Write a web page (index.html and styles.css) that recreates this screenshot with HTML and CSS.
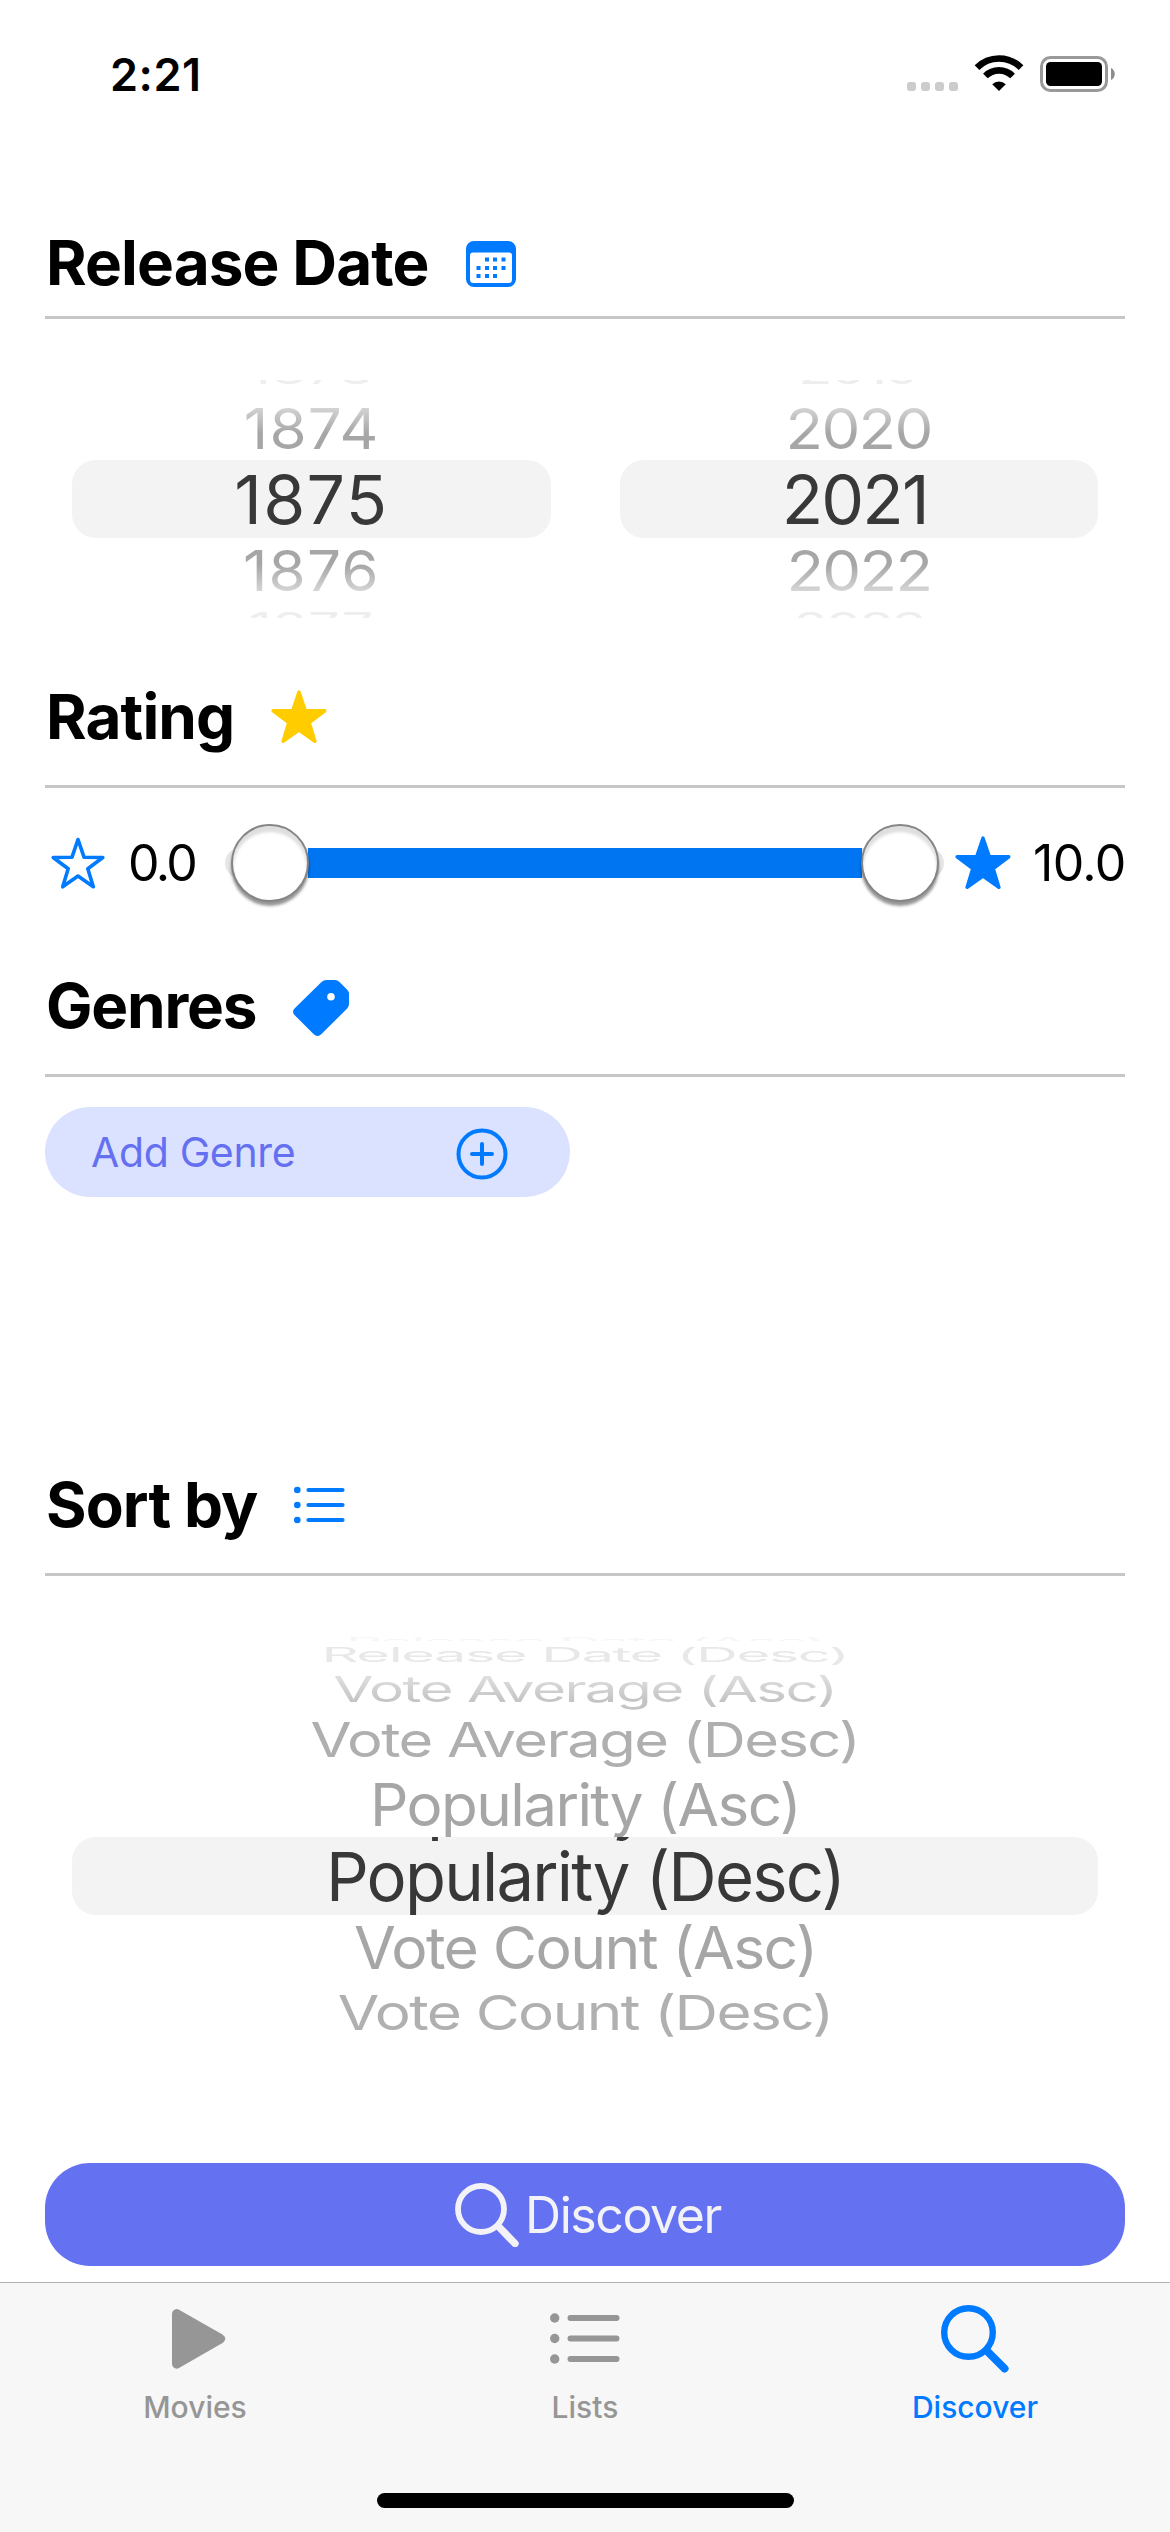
FILE: index.html
```html
<!DOCTYPE html>
<html lang="en">
<head>
<meta charset="utf-8">
<title>Discover</title>
<link rel="stylesheet" href="styles.css">
</head>
<body>
<div class="screen">
  <header class="status">
    <span class="time">2:21</span>
    <svg class="status-icons" width="210" height="40" viewBox="0 0 210 40">
      <g fill="#ccc"><rect x="2" y="28" width="9" height="9" rx="3"/><rect x="16" y="28" width="9" height="9" rx="3"/><rect x="30" y="28" width="9" height="9" rx="3"/><rect x="44" y="28" width="9" height="9" rx="3"/></g>
      <g fill="none" stroke="#000" stroke-width="6.6"><path d="M72 13.6a31 31 0 0 1 44 0"/><path d="M80.400 22a19.200 19.200 0 0 1 27.200 0"/></g>
      <path d="M94 37l-6.800-6.800a9.800 9.800 0 0 1 13.600 0z"/>
      <rect x="136.500" y="3.500" width="65" height="33" rx="9" fill="none" stroke="#999" stroke-width="3"/>
      <rect x="141" y="8" width="56" height="24" rx="4.500"/>
      <path d="M206 14c5 2.400 5 9.600 0 12z" fill="#8c8c8c"/>
    </svg>
  </header>

  <main class="content">
    <section class="section release">
      <div class="heading">
        <h2 class="t-release">Release Date</h2>
        <svg width="50" height="46" viewBox="0 0 50 46" fill="#007aff"><path fill-rule="evenodd" d="M8 0h34a8 8 0 0 1 8 8v30a8 8 0 0 1-8 8H8a8 8 0 0 1-8-8V8a8 8 0 0 1 8-8zM7 11.500a3 3 0 0 0-3 3V38.500a3.500 3.500 0 0 0 3.500 3.500h35a3.500 3.500 0 0 0 3.500-3.500V14.500a3 3 0 0 0-3-3z"/><path d="M19 16.500h4v4h-4zM27 16.500h4v4h-4zM35.500 16.500h4v4h-4zM10.500 25h4v4h-4zM19 25h4v4h-4zM27 25h4v4h-4zM35.500 25h4v4h-4zM10.500 33h4v4h-4zM19 33h4v4h-4zM27 33h4v4h-4z"/></svg>
      </div>
      <div class="years">
        <div class="wheel year from">
          <div class="row edge-top"><span>1873</span></div>
          <div class="row prev"><span>1874</span></div>
          <div class="row selected"><span>1875</span></div>
          <div class="row next"><span>1876</span></div>
          <div class="row edge-bottom"><span>1877</span></div>
        </div>
        <div class="wheel year to">
          <div class="row edge-top"><span>2019</span></div>
          <div class="row prev"><span>2020</span></div>
          <div class="row selected"><span>2021</span></div>
          <div class="row next"><span>2022</span></div>
          <div class="row edge-bottom"><span>2023</span></div>
        </div>
      </div>
    </section>

    <section class="section rating">
      <div class="heading">
        <h2 class="t-rating">Rating</h2>
        <svg class="star-gold" width="56" height="54" viewBox="0 0 56 54"><path d="M28 2l6.300 18.500 19.500.3-15.600 11.800 5.700 18.700L28 40.100 12.100 51.300l5.700-18.700L2.200 20.800l19.500-.3z" fill="#fc0" stroke="#fc0" stroke-width="3.400" stroke-linejoin="round"/></svg>
      </div>
      <div class="range">
        <svg width="56" height="54" viewBox="0 0 56 54"><path d="M28 3.500l6 17.700 18.800.3-15 11.300 5.500 18L28 40.100 12.700 50.800l5.500-18L3.200 21.500l18.800-.3z" fill="none" stroke="#007aff" stroke-width="3.600" stroke-linejoin="round"/></svg>
        <span class="low">0.0</span>
        <div class="slider"><i class="knob"></i><i class="track"></i><i class="knob"></i></div>
        <svg width="56" height="54" viewBox="0 0 56 54"><path d="M28 2l6.300 18.500 19.500.3-15.600 11.800 5.700 18.700L28 40.100 12.100 51.300l5.700-18.700L2.200 20.800l19.500-.3z" fill="#007aff" stroke="#007aff" stroke-width="3.400" stroke-linejoin="round"/></svg>
        <span class="high">10.0</span>
      </div>
    </section>

    <section class="section genres">
      <div class="heading">
        <h2 class="t-genres">Genres</h2>
        <svg class="tag" width="56" height="56" viewBox="0 0 56 56"><path fill="#007aff" fill-rule="evenodd" d="M28.500 2Q30.500 0 33.500 0H42Q44.500 0 46.500 2L54 9.500Q56 11.500 56 14v10Q56 26.500 54.200 28.500L28.500 54Q24.500 58 20.500 54L2 35.500Q-2 31.500 2 28zM38 13a3.800 3.800 0 1 0 0 7.600 3.800 3.800 0 0 0 0-7.600z"/></svg>
      </div>
      <button class="add">
        <span>Add Genre</span>
        <svg width="52" height="52" viewBox="0 0 52 52" fill="none" stroke="#007aff" stroke-width="4" stroke-linecap="round"><circle cx="26" cy="26" r="23.500"/><path d="M26 16v20M16 26h20"/></svg>
      </button>
    </section>

    <section class="section sort">
      <div class="heading">
        <h2 class="t-sort">Sort by</h2>
        <svg class="list" width="51" height="38" viewBox="0 0 51 38"><g fill="#007aff"><circle cx="3.300" cy="4" r="3.300"/><circle cx="3.300" cy="19" r="3.300"/><circle cx="3.300" cy="34" r="3.300"/></g><path d="M14.500 4h34M14.500 19h34M14.500 34h34" stroke="#007aff" stroke-width="4.200" stroke-linecap="round"/></svg>
      </div>
      <div class="wheel order">
        <div class="row o1"><span>Release Date (Asc)</span></div>
        <div class="row o2"><span>Release Date (Desc)</span></div>
        <div class="row o3"><span>Vote Average (Asc)</span></div>
        <div class="row o4"><span>Vote Average (Desc)</span></div>
        <div class="row o5"><span>Popularity (Asc)</span></div>
        <div class="row selected"><span class="peek" aria-hidden="true">Popularity (Asc)</span><span class="current">Popularity (Desc)</span></div>
        <div class="row o7"><span>Vote Count (Asc)</span></div>
        <div class="row o8"><span>Vote Count (Desc)</span></div>
      </div>
    </section>

    <button class="discover">
      <svg width="64" height="64" viewBox="0 0 64 64" fill="none" stroke="#f2f2f7" stroke-linecap="round"><circle cx="26" cy="26" r="23" stroke-width="5.800"/><path d="M43.500 43.500L60 60.500" stroke-width="7.400"/></svg>
      <span>Discover</span>
    </button>
  </main>

  <nav class="tabs">
    <a class="tab"><svg class="play" width="54" height="68" viewBox="0 0 54 68"><path d="M3 4.500q2-1 4 .3L50.500 29.500q5.500 4.200 0 8.400L7 63q-2 1.200-4 .2-3-1.200-3-5V9.500q0-4 3-5z" fill="#969696"/></svg><span>Movies</span></a>
    <a class="tab"><svg width="70" height="68" viewBox="0 0 70 68"><g fill="#969696"><circle cx="4.700" cy="13" r="4.700"/><circle cx="4.700" cy="33.500" r="4.700"/><circle cx="4.700" cy="54" r="4.700"/></g><path d="M20.500 13H66.500M20.500 33.500H66.500M20.500 54H66.500" stroke="#969696" stroke-width="6" stroke-linecap="round"/></svg><span>Lists</span></a>
    <a class="tab active"><svg width="68" height="68" viewBox="0 0 68 68" fill="none" stroke="#007aff" stroke-linecap="round"><circle cx="27.500" cy="27.500" r="24.300" stroke-width="6.400"/><path d="M46 46L63.500 63.500" stroke-width="8"/></svg><span>Discover</span></a>
    <i class="home"></i>
  </nav>
</div>
</body>
</html>
```
FILE: styles.css
```css
* { box-sizing: border-box; margin: 0; padding: 0; }
body { background: #fff; font-family: Inter, "Liberation Sans", sans-serif; color: #000; }
button { border: 0; font: inherit; }
svg { display: block; flex: none; }
span { white-space: nowrap; }

.screen { width: 1170px; height: 2532px; display: flex; flex-direction: column; overflow: hidden; }

.status { height: 148px; padding: 0 50px 0 110px; display: flex; justify-content: space-between; align-items: center; flex: none; }
.time { font-size: 45px; font-weight: 600; line-height: 1; letter-spacing: 0.5px; }
.status-icons { width: 210px; margin-right: 5px; }

.content { flex: 1; padding: 0 45px; display: flex; flex-direction: column; }
.section { flex: none; }
.heading { display: flex; align-items: center; border-bottom: 3px solid #c6c6c8; }
.heading h2 { font-size: 62px; font-weight: 700; line-height: 1; letter-spacing: -0.9px; white-space: nowrap; flex: none; }

.release { height: 486px; }
.release .heading { height: 171px; padding: 61px 0 0 1px; }
.release .heading svg { margin: 3px 0 0 38px; }
.t-release { width: 382px; }
.t-rating { width: 191px; }
.t-genres { width: 212px; }
.t-sort { width: 213px; }
.heading .t-genres { letter-spacing: -1.2px; }

.rating { height: 308px; }
.rating .heading { height: 154px; padding: 14px 0 0 1px; }
.star-gold { margin-left: 34px; }
.genres { height: 478px; }
.genres .heading { height: 135px; padding: 0 0 5px 1px; }
.tag { margin: 5px 0 0 35px; }
.sort { height: 743px; }
.sort .heading { height: 156px; padding: 16px 0 0 1px; }
.list { margin-left: 35px; }

.row { display: flex; align-items: center; justify-content: center; color: #a6a6a6; flex: none; }
.row span { display: block; font-size: 68px; line-height: 1; }
.row.selected { height: 78px; border-radius: 24px; background: #f3f3f3; color: #383838; }

.years { display: flex; gap: 69px; padding: 61px 27px 0; }
.year { width: 479px; overflow: hidden; }
.from .row span { letter-spacing: 1.3px; }
.to .row span { letter-spacing: -1.9px; }
.to .selected { padding-right: 8px; }
.year .edge-top { height: 15px; align-items: flex-end; overflow: hidden; }
.year .edge-top span { transform: translateY(10px) scale(0.82, 0.5); color: #eee; }
.year .prev { height: 65px; }
.year .next { height: 63px; }
.year .prev span, .year .next span { color: transparent; -webkit-background-clip: text; background-clip: text; }
.year .prev span { background-image: linear-gradient(#d8d8d8 10%, #a6a6a6 60%); }
.year .next span { background-image: linear-gradient(#a6a6a6 40%, #d8d8d8 90%); }
.from .prev span, .from .next span { transform: scale(0.885, 0.83); }
.to .prev span, .to .next span { transform: scale(0.907, 0.83); }
.year .edge-bottom { height: 17px; align-items: flex-start; overflow: hidden; }
.year .edge-bottom span { transform: translateY(-11px) scale(0.82, 0.5); color: #eee; }

.range { display: flex; align-items: center; height: 149px; padding-left: 5px; }
.range span { font-size: 50px; line-height: 1; flex: none; }
.low { width: 104px; margin-left: 22px; letter-spacing: -2.6px; }
.high { margin-left: 22px; letter-spacing: -0.7px; }
.slider { display: flex; align-items: center; width: 706px; margin-right: 17px; flex: none; position: relative; }
.slider::before { content: ""; position: absolute; left: -7px; right: -6px; top: 24px; height: 30px; border-radius: 15px; background: #e6e6e6; }
.slider .knob { width: 78px; height: 78px; margin: 0 -1px; border-radius: 50%; background: #fff; border: 2px solid #858585; box-shadow: 0 4px 3px rgba(0,0,0,.42), inset 0 6px 3px rgba(0,0,0,.13); position: relative; z-index: 2; flex: none; }
.slider .track { width: 554px; height: 30px; background: #0075f2; position: relative; z-index: 1; flex: none; }

.add { margin-top: 30px; width: 525px; height: 90px; border-radius: 45px; background: #dbe2ff; color: #6570f0; display: flex; align-items: center; justify-content: space-between; padding: 0 62px 0 46px; }
.add svg { margin-top: 3px; }
.add span { font-size: 41px; line-height: 1; letter-spacing: -0.35px; }

.order { margin-top: 60px; }
.order .row span { letter-spacing: -1.8px; }
.order .row.selected { margin: 0 27px; overflow: hidden; position: relative; }
.order .current { transform: scaleX(0.985); }
.order .peek { position: absolute; bottom: 79px; left: 0; right: 0; text-align: center; transform: scaleX(0.97); }
.o1 { height: 5px; overflow: hidden; }
.o1 span { transform: translateY(2px) scale(0.827, 0.15); color: #f6f6f6; }
.o2 { height: 28px; }
.o2 span { transform: scale(0.853, 0.29); color: #e8e8e8; }
.o3 { height: 40px; }
.o3 span { padding: 12px 0; transform: scale(0.859, 0.52); color: transparent; background: linear-gradient(#dedede 25%, #c4c4c4 75%); -webkit-background-clip: text; background-clip: text; }
.o4 { height: 62px; }
.o4 span { transform: scale(0.877, 0.7); color: #afafaf; }
.o5 { height: 66px; }
.o5 span { transform: scale(0.885, 0.86); }
.o7 { height: 64px; }
.o7 span { transform: scale(0.892, 0.86); }
.o8 { height: 65px; }
.o8 span { transform: scale(0.886, 0.71); color: #b0b0b0; }

.discover { height: 103px; border-radius: 45px; background: #6471f1; color: #f2f2f7; display: flex; align-items: center; justify-content: center; flex: none; padding-left: 6px; }
.discover span { font-size: 50px; line-height: 1; letter-spacing: -1.4px; margin-left: 6px; }

.tabs { height: 250px; flex: none; background: #f7f7f7; border-top: 1px solid #b2b2b2; display: grid; grid-template-columns: repeat(3, 390px); grid-template-rows: 210px 15px; justify-items: center; }
.tab { display: flex; flex-direction: column; align-items: center; padding-top: 22px; color: #969696; }
.tab span { font-size: 30px; font-weight: 500; line-height: 30px; margin-top: 19px; }
.play { margin-left: 8px; }
.active { color: #007aff; }
.home { grid-column: 1 / 4; width: 417px; height: 15px; border-radius: 8px; background: #000; }
```
